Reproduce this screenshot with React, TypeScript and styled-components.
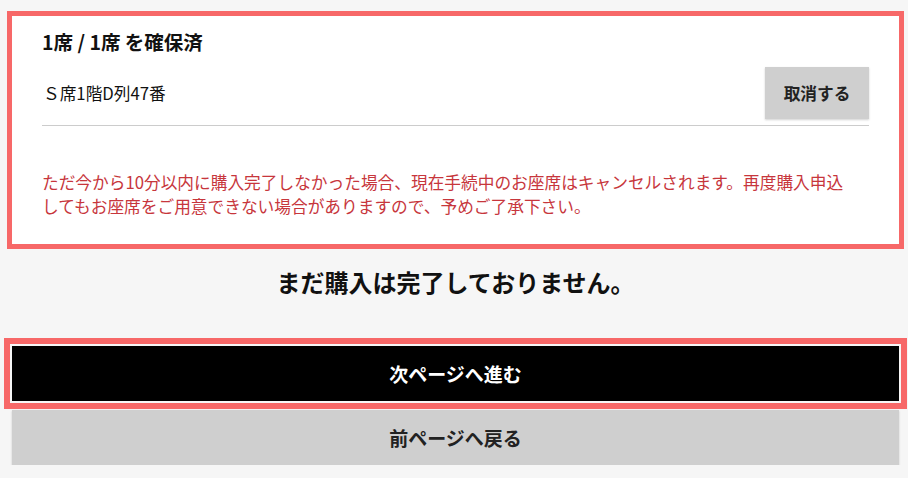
import React from "react";
import styled, { createGlobalStyle } from "styled-components";

const GlobalStyle = createGlobalStyle`
  html, body {
    margin: 0;
    padding: 0;
    background: #f6f6f6;
  }
  body {
    font-family: "Noto Sans CJK JP", "Noto Sans", sans-serif;
    color: #111;
  }
  * { box-sizing: border-box; }
`;

const Page = styled.div`
  padding: 16px 9px 0 12px;
  display: flex;
  flex-direction: column;
`;

const Card = styled.section`
  background: #fff;
  outline: 5px solid #f76868;
  padding: 12px 30px 26px 30px;
  display: flex;
  flex-direction: column;
`;

const Title = styled.h2`
  margin: 0;
  font-size: 19.5px;
  font-weight: 700;
  line-height: 28px;
  color: #111;
`;

const SeatRow = styled.div`
  margin-top: 11px;
  display: flex;
  align-items: center;
  justify-content: space-between;
  padding-bottom: 6px;
  border-bottom: 1px solid #cccccc;
`;

const SeatLabel = styled.span`
  font-size: 16.7px;
  line-height: 24px;
  color: #111;
  padding-left: 1px;
`;

const CancelButton = styled.button`
  width: 104px;
  height: 52px;
  border: none;
  background: #cfcfcf;
  box-shadow: 0 1px 2px rgba(0, 0, 0, 0.18);
  font-family: inherit;
  font-size: 16.7px;
  font-weight: 700;
  color: #222;
  cursor: pointer;
`;

const Notice = styled.p`
  margin: 44px 0 0 0;
  font-size: 16.7px;
  line-height: 24px;
  color: #c7363c;
  padding-right: 12px;
`;

const Headline = styled.h1`
  margin: 21px 0 0 0;
  text-align: center;
  font-size: 24px;
  font-weight: 700;
  line-height: 34px;
  color: #111;
`;

const Actions = styled.div`
  margin-top: 47px;
  display: flex;
  flex-direction: column;
  gap: 9px;
`;

const ActionButton = styled.button<{ $primary?: boolean }>`
  height: 55px;
  width: 100%;
  border: none;
  font-family: inherit;
  font-size: 19px;
  font-weight: 700;
  cursor: pointer;
  background: ${(p) => (p.$primary ? "#000" : "#cfcfcf")};
  color: ${(p) => (p.$primary ? "#fff" : "#222")};
  outline: ${(p) => (p.$primary ? "6px solid #f76868" : "none")};
  outline-offset: 2px;
  box-shadow: ${(p) => (p.$primary ? "none" : "0 1px 2px rgba(0,0,0,0.18)")};
`;

export default function App() {
  return (
    <>
      <GlobalStyle />
      <Page>
        <Card>
          <Title>1席 / 1席 を確保済</Title>
          <SeatRow>
            <SeatLabel>Ｓ席1階D列47番</SeatLabel>
            <CancelButton>取消する</CancelButton>
          </SeatRow>
          <Notice>
            ただ今から10分以内に購入完了しなかった場合、現在手続中のお座席はキャンセルされます。再度購入申込してもお座席をご用意できない場合がありますので、予めご了承下さい。
          </Notice>
        </Card>
        <Headline>まだ購入は完了しておりません。</Headline>
        <Actions>
          <ActionButton $primary>次ページへ進む</ActionButton>
          <ActionButton>前ページへ戻る</ActionButton>
        </Actions>
      </Page>
    </>
  );
}
